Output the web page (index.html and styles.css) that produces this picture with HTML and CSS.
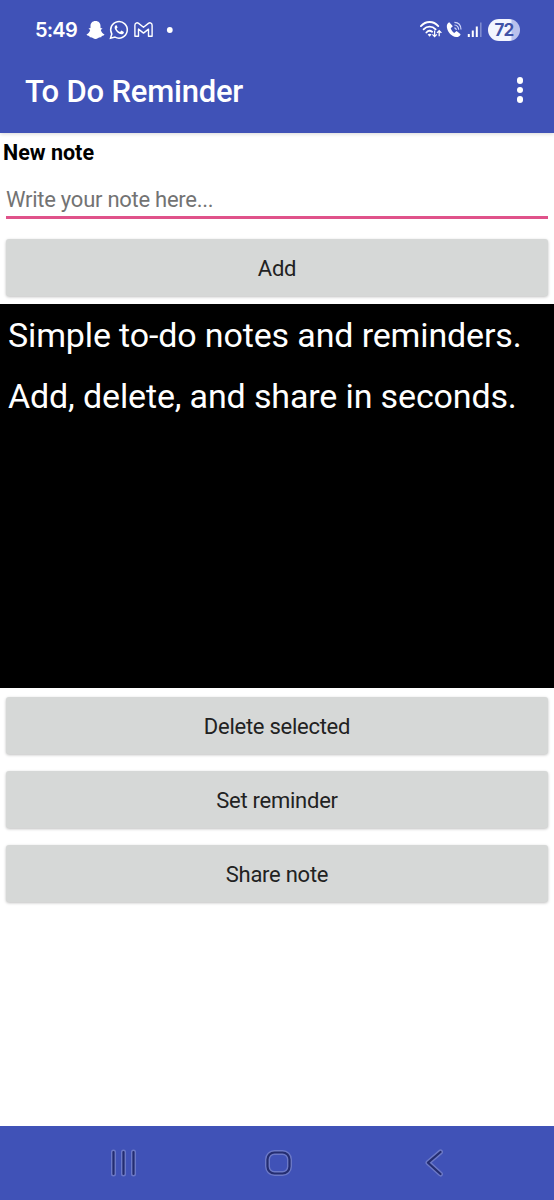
FILE: index.html
```html
<!DOCTYPE html>
<html lang="en">
<head>
<meta charset="utf-8">
<title>To Do Reminder</title>
<link rel="stylesheet" href="styles.css">
</head>
<body>
<header class="app-header">
  <div class="status-bar">
    <span class="time">5:49</span>
    <svg class="left-icons" width="90" height="24" viewBox="0 0 90 24">
      <path fill="#fff" d="M9.500 3C6.200 3 4.500 5.300 4.500 8v2.100L2.500 10.400l1.700 1.600C3.600 14.400 2.300 15.700.5 16.500c.3 1 1.400 1.200 2.700 1.400l.6 1.400c1.400-.2 2.200 0 3.100.8 1.500 1.200 3.700 1.200 5.200 0 .9-.8 1.700-1 3.100-.8l.6-1.400c1.300-.2 2.400-.4 2.700-1.400-1.800-.8-3.100-2.100-3.700-4.500l1.700-1.600-2-.3V8c0-2.700-1.700-5-5-5z"/>
      <path fill="none" stroke="#fff" stroke-width="1.500" d="M24.500 20.300l1.300-4.300a8.300 8.300 0 1 1 3.200 3.100z"/>
      <path fill="#fff" d="M29.800 7.300c-1.300.8-1.500 2.500-.6 4.300 1.300 2.600 3.600 4.400 6 4.700 1.400.1 2.800-.9 2.700-2.400l-2.500-1.300-1.300 1.500c-1.700-.7-2.900-1.900-3.600-3.400l1.100-1.300-1-2.100z"/>
      <path fill="none" stroke="#fff" stroke-width="1.400" stroke-linejoin="round" d="M48.900 18.300V7.200c0-2.100 2-3.100 3.700-1.800l4.900 3.900 4.900-3.900c1.700-1.300 3.700-.3 3.700 1.800v11.100h-3.600v-7.200l-5 4-5-4v7.200z"/>
      <circle cx="83.800" cy="12" r="2.900" fill="#fff"/>
    </svg>
    <svg class="right-icons" width="66" height="24" viewBox="0 0 66 24">
      <g fill="none" stroke="#fff" stroke-width="1.800" stroke-linecap="round">
        <path d="M.9 8.100C5.800 2.600 13.400 2.600 18.300 8.100M3.600 11.300c3.400-3.700 8.600-3.700 12 0M6.400 14.500c1.700-1.900 4-2 5.700-.7"/>
      </g>
      <path fill="#fff" d="M7.600 16.600q2-1.600 4 0l-2 2.200z"/>
      <path fill="none" stroke="#fff" stroke-width="1.300" d="M14.600 12.600v6m-2.200-2.200 2.200 2.200 2.200-2.200M19.200 18.200v-5.600m-2.200 2.300 2.200-2.200 2.200 2.200"/>
      <path fill="#fff" d="M29.300 4.200c-1.900.8-2.800 2.900-2.400 5.400.8 4.900 4.800 9.100 9.200 9.500 2.100.2 4-1.200 4.500-2.900l-4-3.200-2.400 1.900c-1.800-1.200-2.900-2.700-3.500-4.600l2.100-2z"/>
      <path fill="none" stroke="#ccd3fa" stroke-width="1.200" d="M34.400 9.800c1.200.2 1.800 1 1.900 2.200M34.400 7c2.600.2 4.100 2 4.300 4.700M34.400 4.300c4.100.1 6.500 3.100 6.600 7.200"/>
      <path fill="#fff" d="M47.800 16h2v3h-2zm4-3.500h2V19h-2zm4-4h2V19h-2z"/>
      <path fill="#7f8bd0" d="M60 4.500h1.600V19H60z"/>
    </svg>
    <span class="battery">72</span>
  </div>
  <div class="toolbar">
    <h1 class="title">To Do Reminder</h1>
    <div class="menu"><i class="dot"></i><i class="dot"></i><i class="dot"></i></div>
  </div>
</header>
<main class="content">
  <h2 class="label">New note</h2>
  <input class="note-input" type="text" placeholder="Write your note here...">
  <button class="btn btn-add">Add</button>
  <ul class="notes">
    <li class="note">Simple to-do notes and reminders.</li>
    <li class="note">Add, delete, and share in seconds.</li>
  </ul>
  <div class="actions">
    <button class="btn">Delete selected</button>
    <button class="btn">Set reminder</button>
    <button class="btn">Share note</button>
  </div>
</main>
<nav class="nav-bar">
  <svg class="nav-icons" width="554" height="74" viewBox="0 0 554 74">
    <g fill="none" stroke-linecap="round" stroke-linejoin="round">
      <g stroke="#6b78c6" stroke-width="5">
        <path d="M113.500 26v22M123.500 26v22M133.500 26v22M440.500 26 428 36.700l12.500 11.300"/>
        <rect x="267.500" y="26.500" width="22" height="21" rx="7"/>
      </g>
      <g stroke="#242d70" stroke-width="2.200">
        <path d="M113.500 26v22M123.500 26v22M133.500 26v22M440.500 26 428 36.700l12.500 11.300"/>
        <rect x="267.500" y="26.500" width="22" height="21" rx="7"/>
      </g>
    </g>
  </svg>
</nav>
</body>
</html>
```
FILE: styles.css
```css
* { box-sizing: border-box; }
body {
  margin: 0;
  height: 1200px;
  display: flex;
  flex-direction: column;
  background: #fff;
  font-family: Roboto, "Liberation Sans", sans-serif;
}
.app-header {
  height: 133px;
  background: #4052b7;
  color: #fff;
  box-shadow: 0 1px 4px rgba(0, 0, 0, .16);
}
.status-bar {
  display: flex;
  align-items: center;
  height: 60px;
  padding: 0 34px 0 35px;
}
.time {
  width: 51px;
  font: 600 20px/24px Inter, sans-serif;
  letter-spacing: -.8px;
}
.right-icons { margin-left: auto; }
.battery {
  width: 32px;
  height: 22px;
  margin-left: 2px;
  border-radius: 11px;
  background: linear-gradient(90deg, #f3f5ff 70%, #b9c1ec 76%);
  color: #4052a7;
  font: 700 17px/22px Inter, sans-serif;
  letter-spacing: -.8px;
  text-align: center;
}
.toolbar {
  display: flex;
  justify-content: space-between;
  align-items: center;
  height: 62px;
  padding: 0 31px 0 25px;
}
.title {
  margin: 0;
  font-size: 31px;
  font-weight: 500;
  letter-spacing: -.2px;
  white-space: nowrap;
}
.menu {
  display: flex;
  flex-direction: column;
  gap: 3px;
  margin-bottom: 2px;
}
.dot {
  width: 6.500px;
  height: 6.500px;
  border-radius: 50%;
  background: #fff;
}
.content {
  flex: 1;
  display: flex;
  flex-direction: column;
}
.label {
  margin: 6px 3px 0;
  font-size: 21.500px;
  line-height: 27px;
  font-weight: 700;
  color: #000;
}
.note-input {
  height: 37px;
  margin: 16px 6px 0;
  padding: 1px 0 0;
  border: 0;
  border-bottom: 3px solid #e0528a;
  outline: 0;
  font: 400 22px/33px Roboto, sans-serif;
  letter-spacing: -.26px;
}
.note-input::placeholder { color: #737373; opacity: 1; }
.btn {
  height: 57px;
  margin: 0 6px;
  padding: 2px 0 0;
  border: 0;
  border-radius: 3px;
  background: #d6d8d7;
  box-shadow: 0 1px 3px rgba(0, 0, 0, .26);
  color: #222;
  font: 400 22px/55px Roboto, sans-serif;
  letter-spacing: -.26px;
}
.btn-add { margin-top: 20px; }
.notes {
  height: 384px;
  margin: 8px 0 0;
  padding: 1px 8px;
  background: #000;
  color: #fff;
  list-style: none;
}
.note {
  font-size: 34px;
  line-height: 61px;
  letter-spacing: -.14px;
  white-space: nowrap;
}
.actions {
  display: flex;
  flex-direction: column;
  gap: 17px;
  padding-top: 9px;
}
.nav-bar {
  height: 74px;
  background: #4052b7;
}
.nav-icons { display: block; }
```
